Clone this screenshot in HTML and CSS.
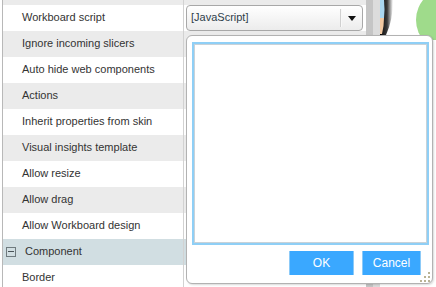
FILE: index.html
```html
<!DOCTYPE html>
<html>
<head>
<meta charset="utf-8">
<link rel="stylesheet" href="styles.css">
</head>
<body>
<div class="app">
  <div class="grid">
    <div class="row gray"><div class="name"></div><div class="value"></div></div>
    <div class="row">
      <div class="name">Workboard script</div>
      <div class="value">
        <div class="select">
          <span class="select-text">[JavaScript]</span>
          <span class="select-btn"><span class="arrow"></span></span>
        </div>
      </div>
    </div>
    <div class="row gray"><div class="name">Ignore incoming slicers</div><div class="value"></div></div>
    <div class="row"><div class="name">Auto hide web components</div><div class="value"></div></div>
    <div class="row gray"><div class="name">Actions</div><div class="value"></div></div>
    <div class="row"><div class="name">Inherit properties from skin</div><div class="value"></div></div>
    <div class="row gray"><div class="name">Visual insights template</div><div class="value"></div></div>
    <div class="row"><div class="name">Allow resize</div><div class="value"></div></div>
    <div class="row gray"><div class="name">Allow drag</div><div class="value"></div></div>
    <div class="row"><div class="name">Allow Workboard design</div><div class="value"></div></div>
    <div class="row category">
      <div class="name cat-name"><span class="toggle"><span class="minus"></span></span>Component</div>
      <div class="value"></div>
    </div>
    <div class="row"><div class="name">Border</div><div class="value"></div></div>
  </div>
  <div class="splitter"><div class="split-a"></div><div class="split-b"></div></div>
  <div class="canvas">
    <svg class="art" width="56" height="40" viewBox="0 0 56 40">
      <defs>
        <linearGradient id="sh" x1="0" x2="1" y1="0" y2="0">
          <stop offset="0" stop-color="#0a0a0a"/>
          <stop offset="0.55" stop-color="#3a3a3a"/>
          <stop offset="1" stop-color="#ffffff"/>
        </linearGradient>
      </defs>
      <path d="M0 0 H13 Q13 20 6 35 H0 Z" fill="url(#sh)"/>
      <path d="M0 0 H4 Q5 10 4 18 H0 Z" fill="#a9d6f0"/>
      <path d="M0 18 H4 Q4 26 2 34 H0 Z" fill="#f2c9a2"/>
      <circle cx="68" cy="20" r="32" fill="#9fdb8b"/>
    </svg>
  </div>
</div>

<div class="dialog">
  <div class="editor"></div>
  <div class="buttons">
    <button class="btn ok">OK</button>
    <button class="btn cancel">Cancel</button>
  </div>
  <svg class="grip" width="10" height="10" viewBox="0 0 10 10">
    <rect x="8" y="0" width="2" height="2" fill="#b9b394"/>
    <rect x="4" y="4" width="2" height="2" fill="#b9b394"/>
    <rect x="8" y="4" width="2" height="2" fill="#b9b394"/>
    <rect x="0" y="8" width="2" height="2" fill="#b9b394"/>
    <rect x="4" y="8" width="2" height="2" fill="#b9b394"/>
    <rect x="8" y="8" width="2" height="2" fill="#b9b394"/>
  </svg>
</div>
</body>
</html>
```

FILE: styles.css
```css
html, body {
  margin: 0;
  padding: 0;
  background: #ffffff;
}
body {
  width: 436px;
  height: 287px;
  overflow: hidden;
  position: relative;
  font-family: "Liberation Sans", Arial, sans-serif;
  font-size: 11px;
  color: #333333;
}
.app {
  display: flex;
  height: 287px;
  padding-left: 2px;
}
.grid {
  width: 363px;
  border-left: 1px solid #b8b8b8;
  margin-top: -21px;
  display: flex;
  flex-direction: column;
  flex: none;
}
.row {
  display: flex;
  height: 26px;
  flex: none;
  background: #ffffff;
}
.row.gray {
  background: #ebebeb;
}
.row.category {
  background: #d1dee2;
}
.name {
  width: 161px;
  padding-left: 19px;
  padding-bottom: 3px;
  border-right: 1px solid #d2d2d2;
  display: flex;
  align-items: center;
  white-space: nowrap;
  flex: none;
}
.cat-name {
  padding-left: 3px;
  width: 177px;
}
.toggle {
  width: 8px;
  height: 8px;
  border: 1px solid #6f7a7e;
  margin-right: 9px;
  margin-top: 2px;
  display: flex;
  align-items: center;
  justify-content: center;
}
.minus {
  width: 6px;
  height: 1px;
  background: #4a5458;
}
.value {
  flex: 1;
  padding-left: 2px;
}
.select {
  width: 175px;
  height: 24px;
  border: 1px solid #a8a8a8;
  border-radius: 4px;
  background: linear-gradient(#ffffff, #ececec);
  display: flex;
  align-items: center;
}
.select-text {
  flex: 1;
  padding-left: 4px;
  padding-bottom: 2px;
  color: #2f3f4b;
}
.select-btn {
  width: 21px;
  height: 18px;
  border-left: 1px solid #d0d0d0;
  box-shadow: inset 1px 0 0 #f8f8f8;
  display: flex;
  align-items: center;
  justify-content: center;
}
.arrow {
  width: 0;
  height: 0;
  border-left: 4px solid transparent;
  border-right: 4px solid transparent;
  border-top: 5px solid #111111;
  margin-left: 1px;
}
.splitter {
  display: flex;
  width: 14px;
  flex: none;
}
.split-a {
  width: 7px;
  background: #c5c5c5;
}
.split-b {
  width: 7px;
  background: #dcdcdc;
}
.canvas {
  flex: 1;
  position: relative;
  background: #ffffff;
}
.art {
  position: absolute;
  left: 0;
  top: 0;
  display: block;
}
.dialog {
  position: absolute;
  left: 186px;
  top: 35px;
  width: 230px;
  height: 236px;
  padding: 6px 10px 5px 5px;
  border: 1px solid #b2b2b2;
  border-radius: 6px;
  background: #ffffff;
  box-shadow: 1px 1px 2px rgba(0, 0, 0, 0.15);
  display: flex;
  flex-direction: column;
}
.editor {
  height: 199px;
  margin-right: -7px;
  border: 2px solid #8fcff6;
  box-shadow: inset 0 0 0 1px #c9d2d8;
  background: #ffffff;
  flex: none;
}
.buttons {
  display: flex;
  justify-content: flex-end;
  gap: 8px;
  margin-top: 6px;
  padding-right: 1px;
}
.btn {
  height: 24px;
  border: none;
  border-left: 1px solid #8ccaf8;
  border-right: 1px solid #8ccaf8;
  background: #3aa8ff;
  color: #ffffff;
  font-family: "Liberation Sans", Arial, sans-serif;
  font-size: 12px;
  padding: 0;
  margin: 0;
}
.btn.ok {
  width: 65px;
}
.btn.cancel {
  width: 59px;
}
.grip {
  position: absolute;
  right: 2px;
  bottom: 1px;
}
```
